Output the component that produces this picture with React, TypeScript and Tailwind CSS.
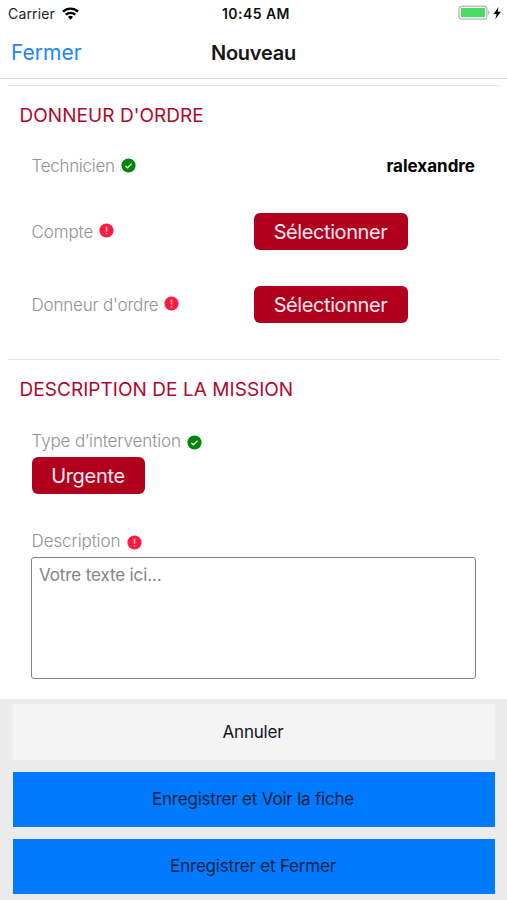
import type { ReactNode } from "react";

function StatusIcon({ ok, className = "" }: { ok?: boolean; className?: string }) {
  return (
    <svg viewBox="0 0 15 15" className={`h-[15px] w-[15px] shrink-0 ${className}`} fill="none">
      <circle cx="7.5" cy="7.5" r="7.1" fill={ok ? "#008509" : "#ff1a40"} />
      {ok ? (
        <path d="M4.4 8l2 1.8 4.3-4.2" stroke="#e9f6e9" strokeWidth="1.3" />
      ) : (
        <path d="M7.5 3.4v5.4M7.5 10v1.5" stroke="#ffb3c0" strokeWidth="1.5" />
      )}
    </svg>
  );
}

function Label({ children, className = "" }: { children: ReactNode; className?: string }) {
  return (
    <span className={`whitespace-nowrap text-[17px] leading-5 font-light text-[#929292] ${className}`}>
      {children}
    </span>
  );
}

function RedButton({ children, className = "" }: { children: ReactNode; className?: string }) {
  return (
    <button
      className={`flex h-[37px] items-center justify-center rounded-[6px] bg-[#b1001e] text-[20px] leading-6 whitespace-nowrap text-[#ffe9ec] ${className}`}
    >
      {children}
    </button>
  );
}

function Title({ children }: { children: ReactNode }) {
  return (
    <h2 className="h-6 pl-[11.5px] text-[19px] leading-6 font-normal tracking-[0.05px] whitespace-nowrap text-[#b1082a]">
      {children}
    </h2>
  );
}

function StatusBar() {
  return (
    <div className="grid h-7 grid-cols-3 items-center pr-[5px] pl-2">
      <div className="flex items-center gap-[7px]">
        <span className="text-[14px] leading-5 tracking-[0.15px] text-[#222]">Carrier</span>
        <svg viewBox="0 0 17 13" className="mb-[2px] h-[13px] w-[17px]" fill="none" stroke="#000" strokeWidth="2.3">
          <path d="M1 4.7a10.8 10.8 0 0 1 15 0" />
          <path d="M3.7 7.7a7 7 0 0 1 9.6 0" />
          <path d="M8.5 12.7L5.9 10a3.8 3.8 0 0 1 5.2 0z" fill="#000" stroke="none" />
        </svg>
      </div>
      <span className="pl-[2px] text-center text-[14px] leading-5 font-semibold tracking-[0.45px] whitespace-nowrap text-[#111]">
        10:45 AM
      </span>
      <svg viewBox="0 0 44 16" className="mb-[2px] h-4 w-11 justify-self-end" fill="none">
        <rect x="0.9" y="1.2" width="28" height="13" rx="3.2" stroke="#b5b2b5" strokeWidth="1.2" />
        <rect x="2.8" y="3.1" width="24.2" height="9.2" rx="1" fill="#4cd964" />
        <path d="M30.4 5.8q1.5 2 0 4z" fill="#b5b2b5" stroke="#b5b2b5" strokeWidth="0.6" />
        <path d="M40.5 2L35.6 9h3.1l-1.5 5.2L42.9 6.8h-3.3z" fill="#000" />
      </svg>
    </div>
  );
}

export default function App() {
  return (
    <div className="flex h-[900px] w-full flex-col overflow-hidden bg-white font-['Inter','Liberation_Sans',sans-serif]">
      <StatusBar />
      <header className="grid h-[51px] shrink-0 grid-cols-3 items-center border-b border-[#d9dadd] px-[11px] pb-px">
        <button className="text-left text-[21px] leading-6 text-[#1b86f8]">Fermer</button>
        <h1 className="text-center text-[20px] leading-6 font-semibold tracking-[-0.25px] text-[#161616]">
          Nouveau
        </h1>
      </header>

      <main className="flex flex-1 flex-col">
        <section className="mr-[7px] ml-2 mt-[6px] h-[274px] border-t border-[#e6e6e6] pt-[18px]">
          <Title>DONNEUR D'ORDRE</Title>
          <div className="mt-7 flex h-5 items-center pr-[25px] pl-[23.5px]">
            <Label className="tracking-[-0.3px]">Technicien</Label>
            <StatusIcon ok className="mb-[2px] ml-[6px]" />
            <span className="ml-auto text-[17px] leading-5 font-bold text-black">ralexandre</span>
          </div>
          <div className="mt-[37px] flex h-[37px] items-center pl-[23.5px]">
            <div className="flex w-[222px] items-center">
              <Label className="tracking-[-0.1px]">Compte</Label>
              <StatusIcon className="mb-[2px] ml-[6px]" />
            </div>
            <RedButton className="w-[154px] tracking-[-0.42px]">Sélectionner</RedButton>
          </div>
          <div className="mt-9 flex h-[37px] items-center pl-[23.5px]">
            <div className="flex w-[222px] items-center">
              <Label className="tracking-[-0.2px]">Donneur d'ordre</Label>
              <StatusIcon className="mb-[2px] ml-[6px]" />
            </div>
            <RedButton className="w-[154px] tracking-[-0.42px]">Sélectionner</RedButton>
          </div>
        </section>

        <section className="mr-[7px] ml-2 flex-1 border-t border-[#e6e6e6] pt-[18px]">
          <Title>DESCRIPTION DE LA MISSION</Title>
          <div className="mt-[29px] flex h-5 items-center pl-[23.5px]">
            <Label className="tracking-[-0.12px]">Type d’intervention</Label>
            <StatusIcon ok className="mt-[3px] ml-[6px]" />
          </div>
          <div className="mt-[6px] pl-[23.5px]">
            <RedButton className="w-[113px] tracking-[-0.3px]">Urgente</RedButton>
          </div>
          <div className="mt-[37px] flex h-5 items-center pl-[23.5px]">
            <Label className="tracking-[-0.1px]">Description</Label>
            <StatusIcon className="mt-[3px] ml-[6.5px]" />
          </div>
          <div className="mt-[6px] pr-6 pl-[23px]">
            <textarea
              placeholder="Votre texte ici..."
              className="block h-[122px] w-full resize-none rounded-[3px] border border-[#858585] px-[7px] py-[7px] text-[17px] leading-5 tracking-[-0.12px] placeholder:text-[#858585]"
            />
          </div>
        </section>
      </main>

      <footer className="flex h-[201px] shrink-0 flex-col bg-[#ebebeb] pr-3 pl-[13px] pt-[5px] text-[17px] tracking-[-0.2px] text-[#10151d]">
        <button className="h-14 shrink-0 bg-[#f4f4f4] pt-[2px] pr-[2px]">Annuler</button>
        <button className="mt-3 h-[55px] shrink-0 bg-[#007aff] pr-[2px] text-[#041f42]">
          Enregistrer et Voir la fiche
        </button>
        <button className="mt-3 h-[55px] shrink-0 bg-[#007aff] pr-[2px] text-[#041f42]">Enregistrer et Fermer</button>
      </footer>
    </div>
  );
}
